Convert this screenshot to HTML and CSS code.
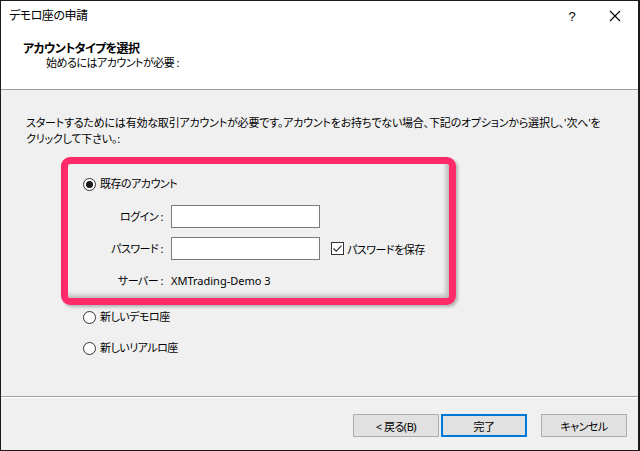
FILE: index.html
```html
<!DOCTYPE html>
<html lang="ja">
<head>
<meta charset="utf-8">
<link rel="stylesheet" href="styles.css">
</head>
<body>
<div class="window">
  <div class="titlebar">
    <div class="title">デモロ座の申請</div>
    <div class="controls">
      <span class="help">?</span>
      <span class="close"><svg width="12" height="12" viewBox="0 0 12 12"><path d="M1 1L11 11M11 1L1 11" stroke="#000" stroke-width="1.1" fill="none"/></svg></span>
    </div>
  </div>
  <div class="header">
    <div class="h-title">アカウントタイプを選択</div>
    <div class="h-sub">始めるにはアカウントが必要 :</div>
  </div>
  <div class="content">
    <p class="intro">スタートするためには有効な取引アカウントが必要です。アカウントをお持ちでない場合、下記のオプションから選択し、'次へ'を<br>クリックして下さい。:</p>
    <div class="highlight">
      <label class="radio-row"><span class="radio checked"></span><span>既存のアカウント</span></label>
      <div class="form">
        <span class="lbl">ログイン :</span>
        <span class="field"><span class="input"></span></span>
        <span class="lbl row2">パスワード :</span>
        <span class="field row2"><span class="input"></span><span class="check"><svg width="13" height="13" viewBox="0 0 13 13"><rect x="0.5" y="0.5" width="12" height="12" fill="#fff" stroke="#333"/><path d="M2.5 6.5L5.2 9.2L10.5 3.6" stroke="#333" stroke-width="1.2" fill="none"/></svg></span><span class="check-text">パスワードを保存</span></span>
        <span class="lbl row3">サーバー :</span>
        <span class="field row3"><span class="server">XMTrading-Demo 3</span></span>
      </div>
    </div>
    <label class="radio-row opt first"><span class="radio"></span><span>新しいデモロ座</span></label>
    <label class="radio-row opt second"><span class="radio"></span><span>新しいリアルロ座</span></label>
  </div>
  <div class="footer">
    <button class="btn">&lt; 戻る(B)</button>
    <button class="btn primary">完了</button>
    <button class="btn cancel">キャンセル</button>
  </div>
</div>
</body>
</html>
```
FILE: styles.css
```css
* { box-sizing: border-box; }
html, body { margin: 0; padding: 0; }
body {
  background: #1b1b1b;
  width: 640px;
  height: 451px;
  overflow: hidden;
  font-family: "Noto Sans", "Noto Sans CJK JP", sans-serif;
  font-size: 11px;
  letter-spacing: -0.5px;
  color: #000;
  font-feature-settings: "palt";
}
.window {
  margin: 1px 0 0 1px;
  width: 637px;
  height: 449px;
  background: #f0f0f0;
  display: flex;
  flex-direction: column;
}
.titlebar {
  height: 30px;
  background: #fff;
  display: flex;
  align-items: center;
  justify-content: space-between;
  padding-left: 8px;
}
.title { line-height: 16px; font-size: 12px; }
.controls { display: flex; align-items: center; height: 30px; }
.help {
  width: 40px;
  text-align: center;
  font-size: 13px;
  font-family: "Liberation Sans", sans-serif;
  letter-spacing: 0;
}
.close {
  width: 46px;
  height: 30px;
  display: flex;
  align-items: center;
  justify-content: center;
}
.header {
  height: 59px;
  background: #fff;
  border-bottom: 1px solid #a0a0a0;
  padding: 11px 0 0 22px;
}
.h-title { font-weight: bold; line-height: 14px; font-size: 12px; letter-spacing: -0.6px; }
.h-sub { padding-left: 23px; line-height: 14px; }
.content {
  flex: 1;
  padding-top: 25px;
}
.intro {
  margin: 0;
  padding-left: 25px;
  line-height: 16px;
  white-space: nowrap;
  letter-spacing: -0.2px;
}
.highlight {
  margin: 10px 0 0 60px;
  width: 395px;
  height: 148px;
  border: 7px solid #fe2a6a;
  border-radius: 9px;
  box-shadow: inset -3px -3px 4px rgba(0,0,0,0.22), 2px 2px 3px rgba(0,0,0,0.25);
  padding: 12px 0 0 15px;
}
.radio-row {
  display: flex;
  align-items: center;
  height: 16px;
  line-height: 16px;
}
.radio {
  width: 13px;
  height: 13px;
  border: 1px solid #333;
  border-radius: 50%;
  background: #fff;
  margin-right: 4px;
  position: relative;
  flex: none;
}
.radio.checked::after {
  content: "";
  position: absolute;
  left: 2px; top: 2px;
  width: 7px; height: 7px;
  border-radius: 50%;
  background: #1a1a1a;
}
.form {
  display: grid;
  grid-template-columns: 72px auto;
  column-gap: 8px;
  margin-left: 8px;
  margin-top: 13px;
  align-items: center;
}
.lbl { text-align: right; line-height: 16px; }
.field { display: flex; align-items: center; height: 23px; }
.input {
  width: 149px;
  height: 23px;
  background: #fff;
  border: 1px solid #7a7a7a;
}
.row2 { margin-top: 9px; }
.check { margin-left: 11px; height: 13px; display: flex; }
.check-text { margin-left: 3px; }
.row3 { margin-top: 13px; height: 16px; }
.server { line-height: 16px; letter-spacing: 0; }
.opt { margin-left: 82px; }
.opt.first { margin-top: 4px; }
.opt.second { margin-top: 15px; }
.footer {
  height: 54px;
  border-top: 1px solid #a0a0a0;
  box-shadow: inset 0 1px 0 #fff;
  display: flex;
  justify-content: flex-end;
  align-items: flex-start;
  padding: 17px 11px 0 0;
}
.btn {
  width: 86px;
  height: 23px;
  background: #e1e1e1;
  border: 1px solid #adadad;
  font: inherit;
  letter-spacing: inherit;
  color: #000;
  padding: 0;
  margin: 0;
}
.btn.primary {
  border: 2px solid #0078d7;
  margin-left: 2px;
}
.btn.cancel { margin-left: 14px; }
```
